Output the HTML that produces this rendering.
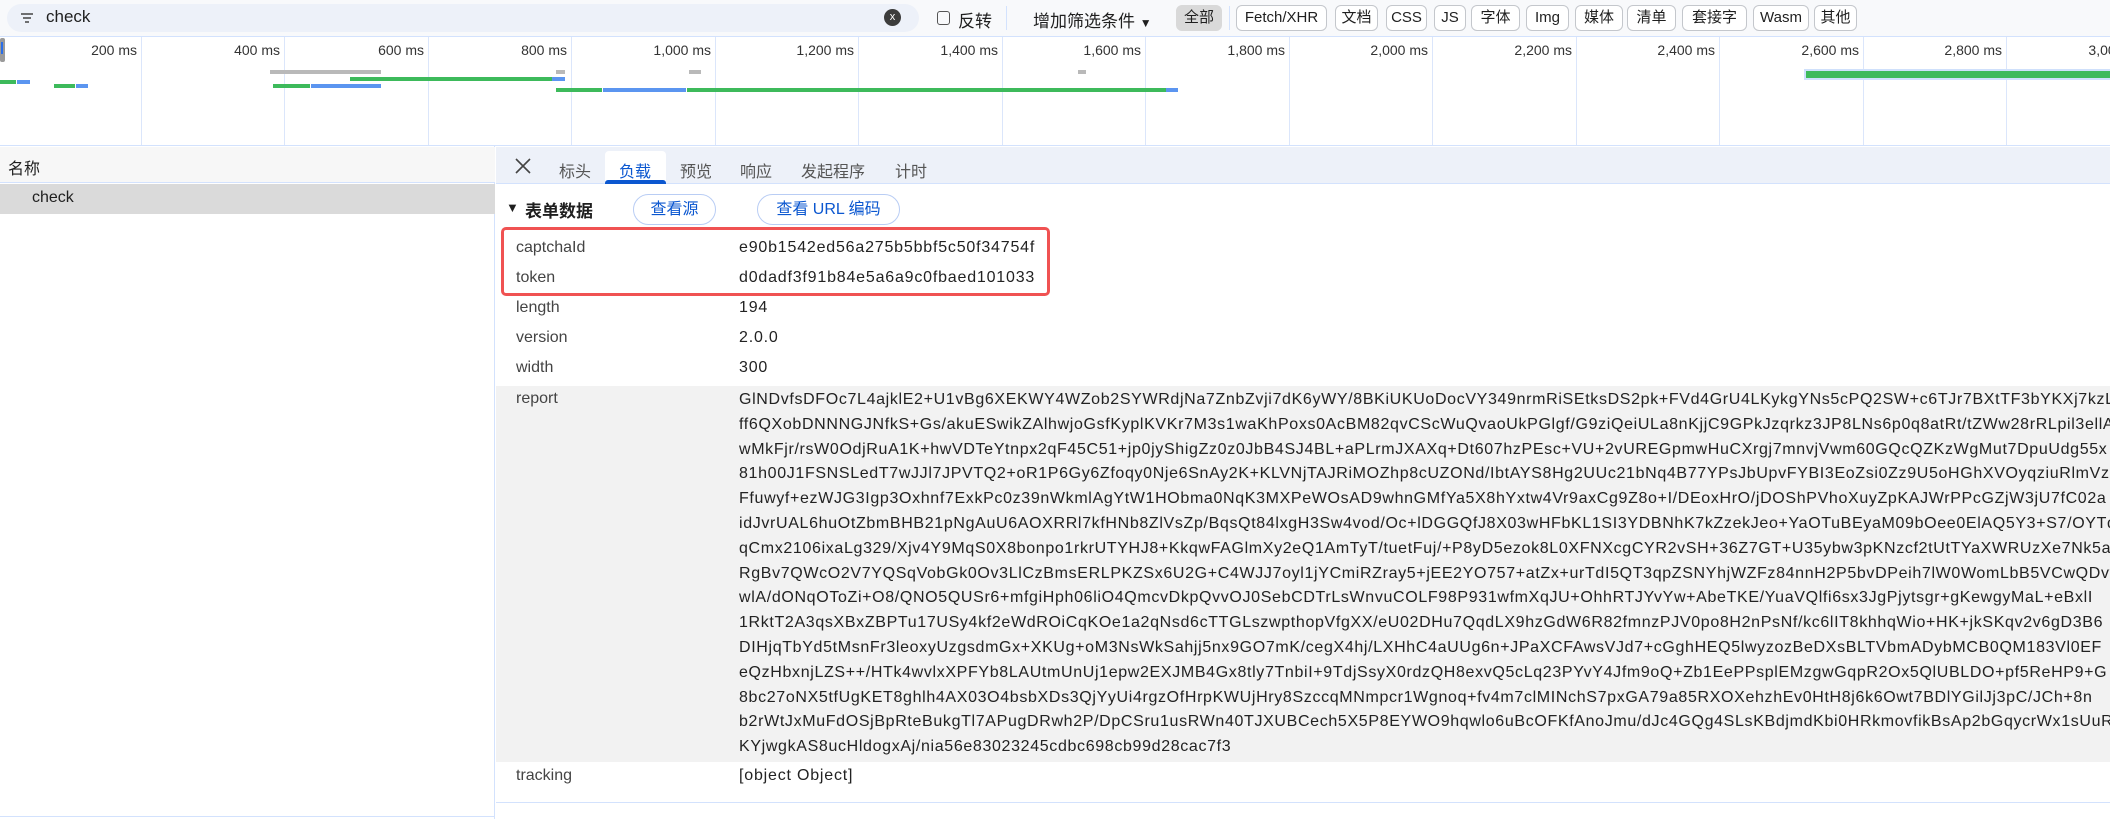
<!DOCTYPE html>
<html><head><meta charset="utf-8"><style>
*{margin:0;padding:0;box-sizing:border-box}
body{width:2110px;height:819px;overflow:hidden;background:#fff;font-family:"Liberation Sans","Noto Sans CJK SC",sans-serif;color:#1f1f1f;position:relative}
.abs{position:absolute}
.tb{left:0;top:0;width:2110px;height:36px;background:#f8f9fb}
.filter{left:7px;top:4px;width:912px;height:28px;background:#edf1f9;border-radius:14px}
.chip{top:5px;height:26px;border:1px solid #c4c7cc;border-radius:6px;font-size:15px;line-height:24px;text-align:center;color:#1f1f1f;background:#fff}
.tl{top:36px;left:0;width:2110px;height:110px;border-top:1px solid #d3e2fd;border-bottom:1px solid #d3e2fd}
.gl{top:37px;width:1px;height:108px;background:#dbe6fb}
.lab{top:42px;font-size:14px;color:#333;text-align:right;width:100px}
.bar{height:4px}
.g{background:#3dba5b}.b{background:#5b95f0}.gr{background:#b9b9b9}
.left{left:0;top:146px;width:495px;height:673px;border-right:1px solid #d3e2fd}
.row{position:absolute;left:516px;font-size:16px;color:#444;white-space:nowrap}
.val{position:absolute;left:739px;font-size:16px;letter-spacing:0.8px;color:#222;white-space:nowrap}
.rep{position:absolute;left:739px;top:386px;width:1371px;overflow:hidden;font-size:16px;letter-spacing:0.65px;line-height:24.8px;white-space:nowrap;color:#222}
.tab{top:158px;font-size:16px;color:#555}
</style></head><body>
<div class="abs tb"></div>
<div class="abs filter"></div>
<svg class="abs" style="left:20px;top:11px" width="14" height="14" viewBox="0 0 14 14"><path d="M1 3h12M3 7h8M5 11h4" stroke="#444" stroke-width="1.6"/></svg>
<div class="abs" style="left:46px;top:7px;font-size:17px">check</div>
<div class="abs" style="left:884px;top:9px;width:17px;height:17px;border-radius:50%;background:#3c3c3c;color:#fff;font-size:11px;line-height:17px;text-align:center">x</div>
<div class="abs" style="left:937px;top:11px;width:13px;height:14px;border:1.5px solid #555;border-radius:3px"></div>
<div class="abs" style="left:958px;top:7px;font-size:17px">反转</div>
<div class="abs" style="left:1006px;top:6px;width:1px;height:24px;background:#d3e2fd"></div>
<div class="abs" style="left:1033px;top:7px;font-size:17px">增加筛选条件 <span style="font-size:12px">▼</span></div>
<div class="abs chip" style="left:1176px;width:46px;background:#d9d9d9;border-color:#d9d9d9">全部</div>
<div class="abs" style="left:1229px;top:6px;width:1px;height:24px;background:#d3e2fd"></div>
<div class="abs chip" style="left:1236px;width:91px">Fetch/XHR</div>
<div class="abs chip" style="left:1335px;width:43px">文档</div>
<div class="abs chip" style="left:1386px;width:41px">CSS</div>
<div class="abs chip" style="left:1434px;width:32px">JS</div>
<div class="abs chip" style="left:1471px;width:49px">字体</div>
<div class="abs chip" style="left:1526px;width:43px">Img</div>
<div class="abs chip" style="left:1575px;width:48px">媒体</div>
<div class="abs chip" style="left:1627px;width:49px">清单</div>
<div class="abs chip" style="left:1682px;width:65px">套接字</div>
<div class="abs chip" style="left:1753px;width:56px">Wasm</div>
<div class="abs chip" style="left:1814px;width:43px">其他</div>

<div class="abs tl"></div>
<div class="abs" style="left:0;top:38px;width:5px;height:24px;background:#9a9a9a;border-radius:2px"></div>
<div class="abs" style="left:1px;top:42px;width:2px;height:12px;background:#2a6ee8"></div>
<div class="abs gl" style="left:141px"></div><div class="abs lab" style="left:37px">200 ms</div>
<div class="abs gl" style="left:284px"></div><div class="abs lab" style="left:180px">400 ms</div>
<div class="abs gl" style="left:428px"></div><div class="abs lab" style="left:324px">600 ms</div>
<div class="abs gl" style="left:571px"></div><div class="abs lab" style="left:467px">800 ms</div>
<div class="abs gl" style="left:715px"></div><div class="abs lab" style="left:611px">1,000 ms</div>
<div class="abs gl" style="left:858px"></div><div class="abs lab" style="left:754px">1,200 ms</div>
<div class="abs gl" style="left:1002px"></div><div class="abs lab" style="left:898px">1,400 ms</div>
<div class="abs gl" style="left:1145px"></div><div class="abs lab" style="left:1041px">1,600 ms</div>
<div class="abs gl" style="left:1289px"></div><div class="abs lab" style="left:1185px">1,800 ms</div>
<div class="abs gl" style="left:1432px"></div><div class="abs lab" style="left:1328px">2,000 ms</div>
<div class="abs gl" style="left:1576px"></div><div class="abs lab" style="left:1472px">2,200 ms</div>
<div class="abs gl" style="left:1719px"></div><div class="abs lab" style="left:1615px">2,400 ms</div>
<div class="abs gl" style="left:1863px"></div><div class="abs lab" style="left:1759px">2,600 ms</div>
<div class="abs gl" style="left:2006px"></div><div class="abs lab" style="left:1902px">2,800 ms</div>
<div class="abs lab" style="left:2046px">3,000 ms</div>
<div class="abs bar gr" style="left:270px;top:70px;width:111px"></div>
<div class="abs bar gr" style="left:556px;top:70px;width:9px"></div>
<div class="abs bar gr" style="left:689px;top:70px;width:12px"></div>
<div class="abs bar gr" style="left:1078px;top:70px;width:8px"></div>
<div class="abs bar g" style="left:0;top:80px;width:16px"></div><div class="abs bar b" style="left:17px;top:80px;width:13px"></div>
<div class="abs bar g" style="left:54px;top:84px;width:21px"></div><div class="abs bar b" style="left:76px;top:84px;width:12px"></div>
<div class="abs bar g" style="left:273px;top:84px;width:37px"></div><div class="abs bar b" style="left:311px;top:84px;width:70px"></div>
<div class="abs bar g" style="left:350px;top:77px;width:202px"></div><div class="abs bar b" style="left:552px;top:77px;width:13px"></div>
<div class="abs bar g" style="left:556px;top:88px;width:46px"></div><div class="abs bar b" style="left:603px;top:88px;width:83px"></div><div class="abs bar g" style="left:687px;top:88px;width:479px"></div><div class="abs bar b" style="left:1166px;top:88px;width:12px"></div>
<div class="abs" style="left:1804px;top:69px;width:306px;height:11px;background:#cfe0fb"></div>
<div class="abs g" style="left:1806px;top:71px;width:304px;height:7px"></div>

<div class="abs left"></div>
<div class="abs" style="left:0;top:147px;width:495px;height:36px;background:#f7f7f7;border-bottom:1px solid #d3e2fd"></div>
<div class="abs" style="left:8px;top:155px;font-size:16px">名称</div>
<div class="abs" style="left:0;top:184px;width:495px;height:30px;background:#dadada"></div>
<div class="abs" style="left:32px;top:189px;font-size:16px">check</div>
<div class="abs" style="left:0;top:816px;width:495px;height:1px;background:#d3e2fd"></div>

<div class="abs" style="left:496px;top:147px;width:1614px;height:37px;background:#edf1f9;border-bottom:1px solid #d3e2fd"></div>
<svg class="abs" style="left:514px;top:157px" width="18" height="18" viewBox="0 0 18 18"><path d="M2 2L16 16M16 2L2 16" stroke="#444" stroke-width="1.6"/></svg>
<div class="abs tab" style="left:559px">标头</div>
<div class="abs" style="left:605px;top:151px;width:61px;height:33px;background:#fff;border-radius:4px 4px 0 0"></div>
<div class="abs tab" style="left:619px;color:#0b57d0">负载</div>
<div class="abs" style="left:605px;top:180px;width:61px;height:4px;background:#0b57d0;border-radius:3px 3px 0 0"></div>
<div class="abs tab" style="left:680px">预览</div>
<div class="abs tab" style="left:740px">响应</div>
<div class="abs tab" style="left:801px">发起程序</div>
<div class="abs tab" style="left:895px">计时</div>

<div class="abs" style="left:506px;top:200px;font-size:13px">▼</div>
<div class="abs" style="left:525px;top:197px;font-size:17px;font-weight:bold">表单数据</div>
<div class="abs" style="left:633px;top:194px;width:83px;height:31px;border:1px solid #b9cdf4;border-radius:16px;color:#0b57d0;font-size:16px;line-height:29px;text-align:center">查看源</div>
<div class="abs" style="left:757px;top:194px;width:143px;height:31px;border:1px solid #b9cdf4;border-radius:16px;color:#0b57d0;font-size:16px;line-height:29px;text-align:center">查看 URL 编码</div>

<div class="abs" style="left:501px;top:227px;width:549px;height:69px;border:3px solid #f05252;border-radius:5px"></div>
<div class="row" style="top:239px">captchaId</div><div class="val" style="top:239px">e90b1542ed56a275b5bbf5c50f34754f</div>
<div class="row" style="top:269px">token</div><div class="val" style="top:269px">d0dadf3f91b84e5a6a9c0fbaed101033</div>
<div class="row" style="top:299px">length</div><div class="val" style="top:299px">194</div>
<div class="row" style="top:329px">version</div><div class="val" style="top:329px">2.0.0</div>
<div class="row" style="top:359px">width</div><div class="val" style="top:359px">300</div>
<div class="abs" style="left:496px;top:386px;width:1614px;height:376px;background:#f2f2f2"></div>
<div class="row" style="top:390px">report</div>
<div class="rep" style="top:388px">GlNDvfsDFOc7L4ajklE2+U1vBg6XEKWY4WZob2SYWRdjNa7ZnbZvji7dK6yWY/8BKiUKUoDocVY349nrmRiSEtksDS2pk+FVd4GrU4LKykgYNs5cPQ2SW+c6TJr7BXtTF3bYKXj7kzLXqw<br>ff6QXobDNNNGJNfkS+Gs/akuESwikZAlhwjoGsfKyplKVKr7M3s1waKhPoxs0AcBM82qvCScWuQvaoUkPGlgf/G9ziQeiULa8nKjjC9GPkJzqrkz3JP8LNs6p0q8atRt/tZWw28rRLpil3ellA<br>wMkFjr/rsW0OdjRuA1K+hwVDTeYtnpx2qF45C51+jp0jyShigZz0z0JbB4SJ4BL+aPLrmJXAXq+Dt607hzPEsc+VU+2vUREGpmwHuCXrgj7mnvjVwm60GQcQZKzWgMut7DpuUdg55x<br>81h00J1FSNSLedT7wJJl7JPVTQ2+oR1P6Gy6Zfoqy0Nje6SnAy2K+KLVNjTAJRiMOZhp8cUZONd/IbtAYS8Hg2UUc21bNq4B77YPsJbUpvFYBI3EoZsi0Zz9U5oHGhXVOyqziuRlmVzPe<br>Ffuwyf+ezWJG3Igp3Oxhnf7ExkPc0z39nWkmlAgYtW1HObma0NqK3MXPeWOsAD9whnGMfYa5X8hYxtw4Vr9axCg9Z8o+I/DEoxHrO/jDOShPVhoXuyZpKAJWrPPcGZjW3jU7fC02a<br>idJvrUAL6huOtZbmBHB21pNgAuU6AOXRRl7kfHNb8ZlVsZp/BqsQt84lxgH3Sw4vod/Oc+lDGGQfJ8X03wHFbKL1SI3YDBNhK7kZzekJeo+YaOTuBEyaM09bOee0ElAQ5Y3+S7/OYTq<br>qCmx2106ixaLg329/Xjv4Y9MqS0X8bonpo1rkrUTYHJ8+KkqwFAGlmXy2eQ1AmTyT/tuetFuj/+P8yD5ezok8L0XFNXcgCYR2vSH+36Z7GT+U35ybw3pKNzcf2tUtTYaXWRUzXe7Nk5a<br>RgBv7QWcO2V7YQSqVobGk0Ov3LlCzBmsERLPKZSx6U2G+C4WJJ7oyl1jYCmiRZray5+jEE2YO757+atZx+urTdI5QT3qpZSNYhjWZFz84nnH2P5bvDPeih7lW0WomLbB5VCwQDvys<br>wlA/dONqOToZi+O8/QNO5QUSr6+mfgiHph06liO4QmcvDkpQvvOJ0SebCDTrLsWnvuCOLF98P931wfmXqJU+OhhRTJYvYw+AbeTKE/YuaVQlfi6sx3JgPjytsgr+gKewgyMaL+eBxlI<br>1RktT2A3qsXBxZBPTu17USy4kf2eWdROiCqKOe1a2qNsd6cTTGLszwpthopVfgXX/eU02DHu7QqdLX9hzGdW6R82fmnzPJV0po8H2nPsNf/kc6lIT8khhqWio+HK+jkSKqv2v6gD3B6<br>DIHjqTbYd5tMsnFr3leoxyUzgsdmGx+XKUg+oM3NsWkSahjj5nx9GO7mK/cegX4hj/LXHhC4aUUg6n+JPaXCFAwsVJd7+cGghHEQ5lwyzozBeDXsBLTVbmADybMCB0QM183Vl0EF<br>eQzHbxnjLZS++/HTk4wvlxXPFYb8LAUtmUnUj1epw2EXJMB4Gx8tly7TnbiI+9TdjSsyX0rdzQH8exvQ5cLq23PYvY4Jfm9oQ+Zb1EePPsplEMzgwGqpR2Ox5QlUBLDO+pf5ReHP9+G<br>8bc27oNX5tfUgKET8ghlh4AX03O4bsbXDs3QjYyUi4rgzOfHrpKWUjHry8SzccqMNmpcr1Wgnoq+fv4m7clMINchS7pxGA79a85RXOXehzhEv0HtH8j6k6Owt7BDlYGilJj3pC/JCh+8n<br>b2rWtJxMuFdOSjBpRteBukgTl7APugDRwh2P/DpCSru1usRWn40TJXUBCech5X5P8EYWO9hqwlo6uBcOFKfAnoJmu/dJc4GQg4SLsKBdjmdKbi0HRkmovfikBsAp2bGqycrWx1sUuRz<br>KYjwgkAS8ucHldogxAj/nia56e83023245cdbc698cb99d28cac7f3</div>
<div class="row" style="top:767px">tracking</div><div class="val" style="top:767px">[object Object]</div>
<div class="abs" style="left:496px;top:802px;width:1614px;height:1px;background:#d3e2fd"></div>
</body></html>
